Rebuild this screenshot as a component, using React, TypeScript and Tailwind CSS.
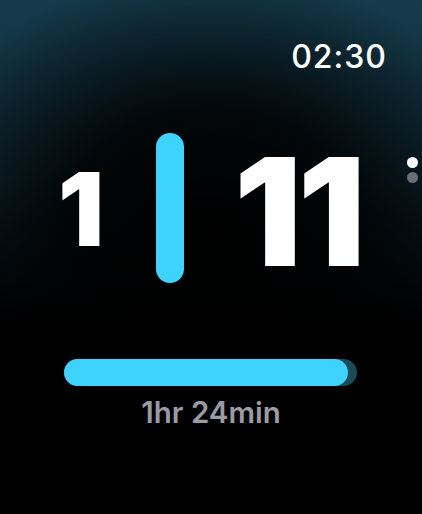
import React from "react";

export default function App() {
  return (
    <div
      className="w-[422px] h-[514px] overflow-hidden relative flex flex-col bg-black bg-[radial-gradient(ellipse_75%_50%_at_50%_44%,#000_0%,rgba(0,0,0,0.85)_45%,rgba(0,0,0,0)_100%),linear-gradient(to_bottom,#153b4c_0%,#0e2a36_35%,#000_62%)]"
      style={{ fontFamily: "Inter, 'Noto Sans', sans-serif" }}
    >
      <div className="flex justify-end pr-[35px] pt-[37px]">
        <span className="text-white text-[32px] leading-[40px] font-medium tracking-[1px]">02:30</span>
      </div>
      <div className="relative flex items-center mt-[56px] h-[150px]">
        <div className="w-[156px] flex justify-end pr-[54px] pt-[2px]">
          <span className="text-white font-black text-[102px] leading-none tracking-[-2px]">1</span>
        </div>
        <div className="w-[28px] h-[150px] rounded-full bg-[#3dd3fd]" />
        <div className="flex-1 flex pl-[50px] pt-[8px]">
          <span className="text-white font-black text-[150px] leading-none tracking-[-4px]">11</span>
        </div>
        <div className="absolute right-[4px] top-[24px] flex flex-col gap-[4px]">
          <div className="w-[11px] h-[11px] rounded-full bg-white" />
          <div className="w-[11px] h-[11px] rounded-full bg-[#6b6e72]" />
        </div>
      </div>
      <div className="mt-[76px] px-[64px] pr-[65px]">
        <div className="h-[27px] rounded-full bg-[#1d4a58] flex">
          <div className="h-full w-[284px] rounded-full bg-[#3dd3fd]" />
        </div>
      </div>
      <div className="flex justify-center mt-[9px]">
        <span className="text-[#9a9ba5] text-[29.5px] leading-[34px] font-semibold">1hr 24min</span>
      </div>
    </div>
  );
}
